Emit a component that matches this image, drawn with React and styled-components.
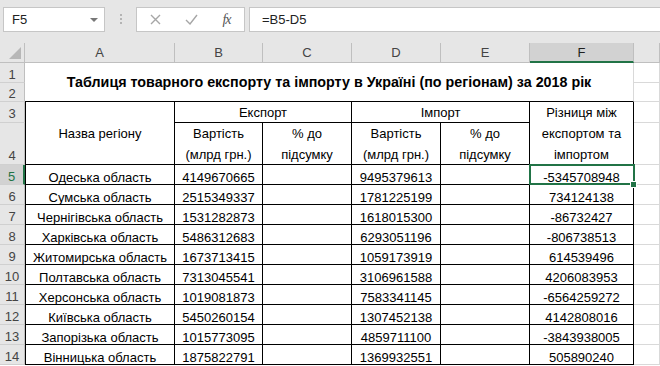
import styled, { createGlobalStyle } from "styled-components";

const GlobalStyle = createGlobalStyle`
  html, body {
    margin: 0;
    padding: 0;
    background: #ffffff;
  }
  body {
    font-family: "Liberation Sans", Arial, sans-serif;
    font-size: 13px;
    color: #000;
  }
`;

const Window = styled.div`
  width: 660px;
  height: 366px;
  overflow: hidden;
  background: #ffffff;
`;

const FormulaBar = styled.div`
  display: flex;
  align-items: flex-start;
  height: 43px;
  box-sizing: border-box;
  padding: 7px 0 0 3px;
  background: #e6e6e6;
`;

const NameBox = styled.div`
  display: flex;
  align-items: center;
  justify-content: space-between;
  width: 102px;
  height: 25px;
  box-sizing: border-box;
  padding: 0 6px 0 8px;
  background: #fff;
  border: 1px solid #c6c6c6;
  color: #222;
`;

const DropArrow = styled.span`
  width: 0;
  height: 0;
  border-left: 4px solid transparent;
  border-right: 4px solid transparent;
  border-top: 4px solid #777;
`;

const Grip = styled.div`
  display: flex;
  flex-direction: column;
  gap: 2px;
  width: 31px;
  align-items: center;
  padding-top: 7px;

  span {
    width: 2px;
    height: 2px;
    background: #b4b4b4;
  }
`;

const FxBox = styled.div`
  display: flex;
  align-items: center;
  width: 109px;
  height: 25px;
  box-sizing: border-box;
  background: #fff;
  border: 1px solid #c6c6c6;
`;

const FxButton = styled.div`
  display: flex;
  align-items: center;
  justify-content: center;
  width: ${({ $w }) => $w}px;
  height: 100%;
  color: ${({ $dim }) => ($dim ? "#a6a6a6" : "#555")};
`;

const FxLabel = styled.span`
  font-family: "Liberation Serif", "Times New Roman", serif;
  font-style: italic;
  font-size: 14px;
  letter-spacing: -1px;
`;

const FormulaInput = styled.div`
  flex: 1;
  height: 25px;
  margin-left: 4px;
  box-sizing: border-box;
  padding-left: 12px;
  display: flex;
  align-items: center;
  background: #fff;
  border: 1px solid #c6c6c6;
  border-right: none;
  color: #222;
`;

const Sheet = styled.div`
  display: grid;
  grid-template-columns: 25px 150px 88px 89px 89px 89px 104px 1fr;
  grid-template-rows: 20px 20px 19px 21px 42px repeat(10, 20px);
`;

const Corner = styled.div`
  position: relative;
  background: #e6e6e6;
  border-right: 1px solid #bfbfbf;
  border-bottom: 1px solid #bfbfbf;

  &::after {
    content: "";
    position: absolute;
    right: 3px;
    bottom: 3px;
    width: 0;
    height: 0;
    border-left: 12px solid transparent;
    border-bottom: 12px solid #b7b7b7;
  }
`;

const ColHead = styled.div`
  display: flex;
  align-items: center;
  justify-content: center;
  box-sizing: border-box;
  background: ${({ $sel }) => ($sel ? "#d2d2d2" : "#e6e6e6")};
  color: ${({ $sel }) => ($sel ? "#1f1f1f" : "#444")};
  border-right: 1px solid #bfbfbf;
  border-bottom: ${({ $sel }) => ($sel ? "2px solid #217346" : "1px solid #bfbfbf")};
`;

const RowHead = styled.div`
  grid-column: 1;
  display: flex;
  align-items: ${({ $bottom }) => ($bottom ? "flex-end" : "center")};
  justify-content: center;
  box-sizing: border-box;
  padding-top: ${({ $low }) => ($low ? "3px" : "0")};
  padding-bottom: ${({ $bottom }) => ($bottom ? "1px" : "0")};
  background: ${({ $sel }) => ($sel ? "#d2d2d2" : "#e6e6e6")};
  color: ${({ $sel }) => ($sel ? "#217346" : "#444")};
  border-bottom: 1px solid #d0d0d0;
  border-right: ${({ $sel }) => ($sel ? "2px solid #217346" : "1px solid #bfbfbf")};
`;

const Cell = styled.div`
  position: relative;
  grid-column: ${({ $col, $span = 1 }) => `${$col} / span ${$span}`};
  grid-row: ${({ $row, $rows = 1 }) => `${$row} / span ${$rows}`};
  display: flex;
  align-items: center;
  justify-content: center;
  text-align: center;
  line-height: 21px;
  box-sizing: border-box;
  padding-top: ${({ $low }) => ($low ? "5px" : "0")};
  white-space: nowrap;
  border-right: 1px solid ${({ $grid }) => ($grid ? "#d9d9d9" : "#000")};
  border-bottom: 1px solid ${({ $grid }) => ($grid ? "#d9d9d9" : "#000")};
  border-left: ${({ $first }) => ($first ? "1px solid #000" : "none")};

  ${({ $active }) =>
    $active &&
    `
    &::after {
      content: "";
      position: absolute;
      left: -1px;
      top: -1px;
      right: -2px;
      bottom: -1px;
      border: 2px solid #217346;
    }
    &::before {
      content: "";
      position: absolute;
      right: -4px;
      bottom: -4px;
      width: 5px;
      height: 5px;
      background: #217346;
      border: 1px solid #fff;
      z-index: 2;
    }
  `}
`;

const Title = styled(Cell)`
  border-bottom-color: #000;
  padding-top: 1px;
  font-weight: 700;
  font-size: 14.3px;
`;

const rows = [
  ["Одеська область", "4149670665", "9495379613", "-5345708948"],
  ["Сумська область", "2515349337", "1781225199", "734124138"],
  ["Чернігівська область", "1531282873", "1618015300", "-86732427"],
  ["Харківська область", "5486312683", "6293051196", "-806738513"],
  ["Житомирська область", "1673713415", "1059173919", "614539496"],
  ["Полтавська область", "7313045541", "3106961588", "4206083953"],
  ["Херсонська область", "1019081873", "7583341145", "-6564259272"],
  ["Київська область", "5450260154", "1307452138", "4142808016"],
  ["Запорізька область", "1015773095", "4859711100", "-3843938005"],
  ["Вінницька область", "1875822791", "1369932551", "505890240"],
];

const columns = ["A", "B", "C", "D", "E", "F", ""];

function Toolbar() {
  return (
    <FormulaBar>
      <NameBox>
        F5
        <DropArrow />
      </NameBox>
      <Grip>
        <span />
        <span />
        <span />
      </Grip>
      <FxBox>
        <FxButton $w={36} $dim>
          <svg width="11" height="11" viewBox="0 0 11 11">
            <path d="M1 1 L10 10 M10 1 L1 10" stroke="currentColor" strokeWidth="1.4" />
          </svg>
        </FxButton>
        <FxButton $w={36} $dim>
          <svg width="13" height="11" viewBox="0 0 13 11">
            <path d="M1 6 L5 10 L12 1" stroke="currentColor" strokeWidth="1.4" fill="none" />
          </svg>
        </FxButton>
        <FxButton $w={35}>
          <FxLabel>fx</FxLabel>
        </FxButton>
      </FxBox>
      <FormulaInput>=B5-D5</FormulaInput>
    </FormulaBar>
  );
}

export default function App() {
  return (
    <Window>
      <GlobalStyle />
      <Toolbar />
      <Sheet>
        <Corner />
        {columns.map((c, i) => (
          <ColHead key={i} $sel={c === "F"}>
            {c}
          </ColHead>
        ))}

        {[1, 2, 3, 4].map((n) => (
          <RowHead key={n} style={{ gridRow: n + 1 }} $bottom={n === 4} $low={n < 4}>
            {n}
          </RowHead>
        ))}

        <Title $col={2} $span={6} $row={2} $rows={2} $grid>
          Таблиця товарного експорту та імпорту в Україні (по регіонам) за 2018 рік
        </Title>
        <Cell $col={8} $row={2} $grid />
        <Cell $col={8} $row={3} $grid />

        <Cell $col={2} $row={4} $rows={2} $first>
          Назва регіону
        </Cell>
        <Cell $col={3} $span={2} $row={4}>
          Експорт
        </Cell>
        <Cell $col={5} $span={2} $row={4}>
          Імпорт
        </Cell>
        <Cell $col={7} $row={4} $rows={2}>
          Різниця між
          <br />
          експортом та
          <br />
          імпортом
        </Cell>
        <Cell $col={8} $row={4} $grid />
        <Cell $col={3} $row={5}>
          Вартість
          <br />
          (млрд грн.)
        </Cell>
        <Cell $col={4} $row={5}>
          % до
          <br />
          підсумку
        </Cell>
        <Cell $col={5} $row={5}>
          Вартість
          <br />
          (млрд грн.)
        </Cell>
        <Cell $col={6} $row={5}>
          % до
          <br />
          підсумку
        </Cell>
        <Cell $col={8} $row={5} $grid />

        {rows.map((r, i) => {
          const row = i + 6;
          return [
            <RowHead key={`h${i}`} style={{ gridRow: row }} $sel={i === 0} $low>
              {i + 5}
            </RowHead>,
            <Cell key={`a${i}`} $col={2} $row={row} $first $low>
              {r[0]}
            </Cell>,
            <Cell key={`b${i}`} $col={3} $row={row} $low>
              {r[1]}
            </Cell>,
            <Cell key={`c${i}`} $col={4} $row={row} />,
            <Cell key={`d${i}`} $col={5} $row={row} $low>
              {r[2]}
            </Cell>,
            <Cell key={`e${i}`} $col={6} $row={row} />,
            <Cell key={`f${i}`} $col={7} $row={row} $active={i === 0} $low>
              {r[3]}
            </Cell>,
            <Cell key={`g${i}`} $col={8} $row={row} $grid />,
          ];
        })}
      </Sheet>
    </Window>
  );
}
